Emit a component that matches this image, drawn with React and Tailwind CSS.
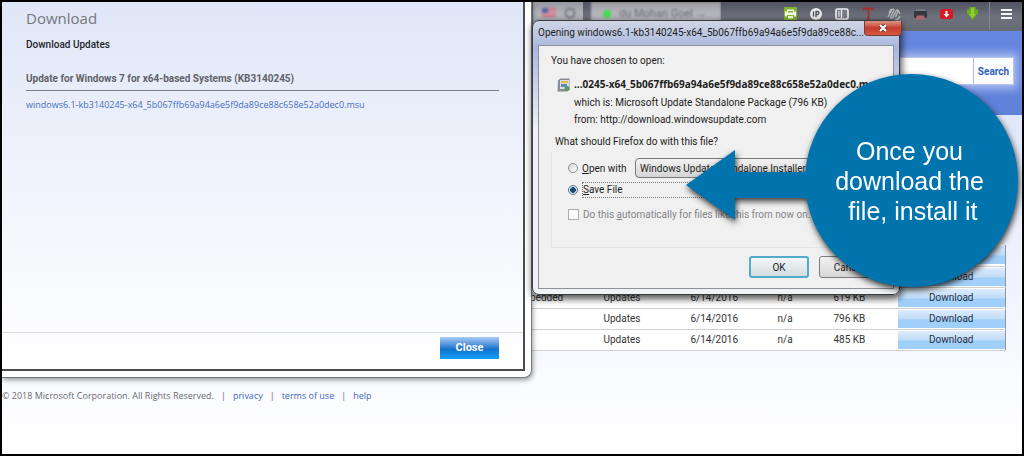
import React from "react";

const rows = [
  { title: "", kind: "", date: "", version: "", size: "" },
  { title: "", kind: "", date: "", version: "", size: "" },
  { title: "bedded", kind: "Updates", date: "6/14/2016", version: "n/a", size: "619 KB" },
  { title: "", kind: "Updates", date: "6/14/2016", version: "n/a", size: "796 KB" },
  { title: "", kind: "Updates", date: "6/14/2016", version: "n/a", size: "485 KB" },
];

function ToolButton({ label, children }) {
  return (
    <button type="button" aria-label={label} className="flex h-6 w-[26px] items-center justify-center">
      <svg width="16" height="14" viewBox="0 0 16 14" fill="none">
        {children}
      </svg>
    </button>
  );
}

function Toolbar() {
  return (
    <div className="flex h-[29px] items-start justify-between bg-linear-to-b from-[#50535f] via-[#6d717c] to-[#666a74] pl-[531px]">
      <div className="flex gap-2 overflow-hidden text-[#696b74]">
        <div className="flex h-7 w-[50px] items-start justify-center bg-linear-to-b from-[#96979f] via-[#b2b3b9] via-40% to-[#b4b5bb] pt-1">
          <svg width="38" height="14" viewBox="0 0 38 14" fill="none" className="blur-[1px]">
            <rect x="3" y="2" width="14" height="9" fill="#c9707e" />
            <path d="M3 5h14M3 8h14" stroke="#e3c8cf" />
            <rect x="3" y="2" width="6" height="5" fill="#5c60ac" />
            <circle cx="31" cy="7" r="4.500" stroke="#777982" strokeWidth="2" />
          </svg>
        </div>
        <div className="flex h-7 w-[130px] items-start gap-2 bg-linear-to-b from-[#9b9ca3] via-[#b5b6bc] via-40% to-[#b8b9be] px-3 pt-1 text-[11px] leading-4 whitespace-nowrap blur-[1px]">
          <span className="mt-1 h-2 w-2 rounded-full bg-[#43dd4b]" />
          <span>du Mohan Goel →</span>
        </div>
      </div>
      <div className="flex items-start">
        <ToolButton label="Print friendly">
          <rect x="2" y="0" width="13" height="13" rx="1" fill="#7fb52a" />
          <path d="M5 2.500h7v2h2v5h-2V8H5v1.500H3v-5h2z" fill="#f3f8e8" />
          <path d="M6 4h5v1.500H6z" fill="#7fb52a" />
          <path d="M6 9h5v2.500H6z" fill="#f3f8e8" />
        </ToolButton>
        <ToolButton label="IP address">
          <circle cx="8" cy="7" r="6" fill="#e9eaec" />
          <path d="M5.500 4.500v5M8 10V4.500h1.500a1.500 1.500 0 0 1 0 3H8" stroke="#4b4e58" strokeWidth="1.300" />
        </ToolButton>
        <ToolButton label="Sidebar">
          <rect x="2" y="2" width="12" height="10" rx="1.500" fill="#777b86" stroke="#eff0f2" strokeWidth="1.600" />
          <path d="M7.500 3v8" stroke="#eff0f2" strokeWidth="1.300" />
          <path d="M4 5h2M4 7h2M4 9h2" stroke="#eff0f2" />
        </ToolButton>
        <ToolButton label="Text tool">
          <path d="M4 3.500V1.500h9v2M8.500 1.500V14" stroke="#a33130" strokeWidth="1.800" />
        </ToolButton>
        <ToolButton label="Attachments">
          <path
            d="M2 10 6 2.500q1.500-1 2 .5L5 9.500q-1 2.500 1.500 1.500L10 4q1.500-2 2 0L9.500 10M3 6l2-4M9 12.500q3 1 5-3.500M12 3l2 4"
            stroke="#b5b8b8"
            strokeWidth="1.300"
          />
        </ToolButton>
        <ToolButton label="Printer">
          <path d="M4 2h9v3H4z" fill="#747780" />
          <rect x="2" y="4" width="13" height="7" rx="1" fill="#35373f" />
          <path d="M5 8.500h7l1.500 4h-10z" fill="#b0666a" />
        </ToolButton>
        <ToolButton label="Video download">
          <rect x="2" y="2" width="13" height="10" rx="2.500" fill="#dd1721" />
          <path d="M7.500 4h2v3h2l-3 3.500-3-3.500h2z" fill="#fff" />
        </ToolButton>
        <ToolButton label="Downloads">
          <path d="M5.500 0h6v2.500h2.500V7h-1l-4.500 6L4 7H3V2.500h2.500z" fill="#6fae1d" />
          <path d="M7 1.500h3v5.500h2L8.500 11 5 7h2z" fill="#8fd034" />
        </ToolButton>
        <div className="ml-1 flex h-[27px] items-start border-l border-[#858893] px-2">
          <button type="button" aria-label="Menu" className="flex h-6 w-4 items-center justify-center">
            <svg width="11" height="12" viewBox="0 0 11 12">
              <path d="M0 2h11M0 6h11M0 10h11" stroke="#f5f5f7" strokeWidth="2" />
            </svg>
          </button>
        </div>
      </div>
    </div>
  );
}

function SearchHeader() {
  return (
    <header className="flex h-[84px] items-start justify-end bg-linear-to-b from-[#6687df] to-[#6081d8] pt-[26px] pr-2">
      <form className="flex h-7 w-[420px] border border-[#b9c6ec] bg-white shadow-[0_0_8px_4px_#a9bcf0]" onSubmit={(e) => e.preventDefault()}>
        <input type="text" aria-label="Search the catalog" className="min-w-0 flex-1 bg-white outline-none" />
        <button type="button" className="w-10 border-l border-[#b5bccb] bg-[#fafbfe] text-[10px] font-bold text-[#365fb5]">
          Search
        </button>
      </form>
    </header>
  );
}

function UpdatesTable() {
  return (
    <table className="ml-2 w-[996px] table-fixed border-collapse border-r border-[#8a97ab] bg-white text-[10px] text-[#333]">
      <colgroup>
        <col />
        <col className="w-[87px]" />
        <col className="w-[87px]" />
        <col className="w-[56px]" />
        <col className="w-[64px]" />
        <col className="w-[108px]" />
      </colgroup>
      <tbody>
        {rows.map((r, i) => (
          <tr key={i} className="h-[21px] border-b border-[#cfd0d4]">
            <td className="p-0 pl-[520px]">{r.title}</td>
            <td className="p-0">{r.kind}</td>
            <td className="p-0">{r.date}</td>
            <td className="p-0">{r.version}</td>
            <td className="p-0">{r.size}</td>
            <td className="p-0">
              <button type="button" className="block h-[18px] w-full bg-linear-to-b from-[#deebfb] via-[#bfdcf8] via-50% to-[#a0d0f9] to-55% text-[10px] text-[#1f2f4a]">
                Download
              </button>
            </td>
          </tr>
        ))}
      </tbody>
    </table>
  );
}

function DownloadWindow() {
  return (
    <section className="absolute top-0 left-0 w-[530px] rounded-br-lg border-r border-b border-[#75777d] bg-white pr-[6px] pb-[6px] shadow-[1px_2px_5px_#00000066]">
      <div className="border-r-2 border-b-2 border-[#4a4c50] bg-linear-to-b from-[#dfe6f7] via-[#f2f4fc] via-50% to-white">
        <div className="h-[330px] px-6 pt-1">
          <h1 className="font-['Open_Sans','Noto_Sans',sans-serif] text-[15px] leading-6 text-[#75777c]">Download</h1>
          <h2 className="mt-[5px] text-[10px] leading-5 font-medium text-[#24262c]">Download Updates</h2>
          <h3 className="mt-[14px] border-b border-[#7b7e86] pb-px text-[10px] leading-5 font-bold text-[#606268]">
            Update for Windows 7 for x64-based Systems (KB3140245)
          </h3>
          <a href="#file" className="mt-1 block font-['Open_Sans','Noto_Sans',sans-serif] text-[9px] leading-5 text-[#4470c4]">
            windows6.1-kb3140245-x64_5b067ffb69a94a6e5f9da89ce88c658e52a0dec0.msu
          </a>
        </div>
        <div className="flex h-[37px] justify-end border-t border-[#d9dbe0] pt-1 pr-6">
          <button
            type="button"
            className="h-[22px] w-[59px] bg-linear-to-b from-[#a8cbf3] via-[#1272cc] via-55% to-[#11a0fa] text-[11px] font-bold text-white"
          >
            Close
          </button>
        </div>
      </div>
    </section>
  );
}

function OpenFileDialog() {
  return (
    <section
      role="dialog"
      aria-labelledby="dialog-title"
      className="absolute top-[18px] left-[530px] w-[368px] rounded-[7px] border border-[#3a3c42] bg-linear-to-b from-[#d0d5e4] via-[#a9b8e0] via-10% to-[#f1f2f5] to-40% px-[5px] pb-[5px] text-[10px] text-[#1c1d20] shadow-[1px_3px_7px_1px_#000000aa]"
    >
      <div className="flex h-6 items-start justify-between">
        <h2 id="dialog-title" className="pt-1 text-[10px] leading-4 whitespace-nowrap">
          Opening windows6.1-kb3140245-x64_5b067ffb69a94a6e5f9da89ce88c...
        </h2>
        <button
          type="button"
          aria-label="Close dialog"
          className="flex h-[15px] w-[38px] shrink-0 items-center justify-center rounded-b border border-t-0 border-[#7b3a3a] bg-linear-to-b from-[#dc9585] via-[#c43b2c] via-50% to-[#d3593f]"
        >
          <svg width="10" height="8" viewBox="0 0 10 8">
            <path d="M2 1l6 6M8 1 2 7" stroke="#5d3030" strokeWidth="3.500" />
            <path d="M2 1l6 6M8 1 2 7" stroke="#fff" strokeWidth="2" />
          </svg>
        </button>
      </div>
      <div className="h-[244px] border border-[#8e9199] bg-[#f0f0f0] px-3 pt-[5px]">
        <p className="leading-5">You have chosen to open:</p>
        <div className="mt-[3px] flex items-start gap-1 pl-[6px]">
          <svg width="13" height="14" viewBox="0 0 13 14" className="mt-1 shrink-0">
            <path d="M1 2.500 3 .5h9.500v11l-2 2H.5z" fill="#878d94" />
            <rect x="3" y="2" width="9" height="9" fill="#d5dfe4" />
            <path d="M4 3h7v2H4z" fill="#e4bd54" />
            <path d="M4 6h6v3H4z" fill="#6489a9" />
            <circle cx="10" cy="10.500" r="2.500" fill="#63976b" />
          </svg>
          <div>
            <p className="font-['Open_Sans','Noto_Sans',sans-serif] leading-5 font-bold whitespace-nowrap">
              ...0245-x64_5b067ffb69a94a6e5f9da89ce88c658e52a0dec0.msu
            </p>
            <p className="leading-[17px]">
              which is: <span>Microsoft Update Standalone Package (796 KB)</span>
            </p>
            <p className="leading-[17px]">
              from: <span>http://download.windowsupdate.com</span>
            </p>
          </div>
        </div>
        <fieldset className="mt-1">
          <legend className="pl-1 leading-5">What should Firefox do with this file?</legend>
          <div className="h-24 border border-t-0 border-[#e4e4e6] pt-[6px] pl-4">
            <div className="flex h-5 items-center gap-1">
              <input
                id="open-with"
                type="radio"
                name="action"
                className="h-[10px] w-[10px] appearance-none rounded-full border border-[#8d9096] bg-linear-to-br from-[#d4d6d8] to-white"
              />
              <label htmlFor="open-with" className="w-[49px] whitespace-nowrap">
                <u>O</u>pen with
              </label>
              <select
                aria-label="Application"
                className="h-5 w-[200px] appearance-none rounded-sm border border-[#77797d] bg-linear-to-b from-[#f2f2f2] to-[#d6d6d6] px-1 text-[10px]"
              >
                <option>Windows Update Standalone Installer (default)</option>
              </select>
            </div>
            <div className="mt-1 flex h-4 items-center gap-1">
              <input
                id="save-file"
                type="radio"
                name="action"
                defaultChecked
                className="h-[10px] w-[10px] appearance-none rounded-full border border-[#5a7590] bg-radial from-[#174c74] from-45% to-[#dceaf3] to-55%"
              />
              <label htmlFor="save-file" className="w-[260px] border border-dotted border-[#77797d] leading-[14px]">
                <u>S</u>ave File
              </label>
            </div>
            <div className="mt-2 flex h-4 items-center gap-1 text-[#838589]">
              <input id="always" type="checkbox" className="h-[11px] w-[11px] appearance-none border border-[#aaadb3] bg-[#fafafa]" />
              <label htmlFor="always">
                Do this <u>a</u>utomatically for files like this from now on.
              </label>
            </div>
          </div>
        </fieldset>
        <div className="mt-2 flex justify-end gap-[10px] pr-[2px]">
          <button type="button" className="h-[22px] w-[60px] rounded-[3px] border-2 border-[#53aacb] bg-linear-to-b from-[#f3f6f7] to-[#d4dde1]">
            OK
          </button>
          <button type="button" className="h-[22px] w-[60px] rounded-[3px] border border-[#7b7d82] bg-linear-to-b from-[#f3f3f3] to-[#d6d6d6]">
            Cancel
          </button>
        </div>
      </div>
    </section>
  );
}

function Callout() {
  return (
    <aside className="absolute top-[72px] left-[684px] flex items-center drop-shadow-[1px_3px_3px_#000000cc]">
      <svg width="124" height="70" viewBox="0 0 124 70" className="mt-2">
        <path d="M0 35 49 0v22h75v26H49v22z" fill="#0173ad" />
      </svg>
      <div className="-ml-[5px] flex h-[213px] w-[213px] items-center justify-center rounded-full bg-[#0173ad] pr-1 text-center font-['Liberation_Sans',sans-serif] text-[25px] leading-[30px] text-white">
        <p>
          Once you
          <br />
          download the
          <br />
          &nbsp;file, install it
        </p>
      </div>
    </aside>
  );
}

export default function App() {
  return (
    <div className="relative flex min-h-screen flex-col overflow-hidden border-2 border-black bg-white font-[Roboto,'Noto_Sans',sans-serif]">
      <Toolbar />
      <SearchHeader />
      <main className="bg-linear-to-b from-[#e0e7fa] to-[#fafbff] pt-[130px] pb-7">
        <UpdatesTable />
      </main>
      <footer className="flex-1 bg-linear-to-b from-[#fafbff] to-white pt-[7px] font-['Open_Sans','Noto_Sans',sans-serif] text-[9px] leading-5 text-[#686a70]">
        <div className="flex gap-[7px]">
          <span>© 2018 Microsoft Corporation. All Rights Reserved.</span>
          <span>|</span>
          <a href="#privacy" className="text-[#4068c0]">privacy</a>
          <span>|</span>
          <a href="#terms" className="text-[#4068c0]">terms of use</a>
          <span>|</span>
          <a href="#help" className="text-[#4068c0]">help</a>
        </div>
      </footer>
      <DownloadWindow />
      <OpenFileDialog />
      <Callout />
    </div>
  );
}
